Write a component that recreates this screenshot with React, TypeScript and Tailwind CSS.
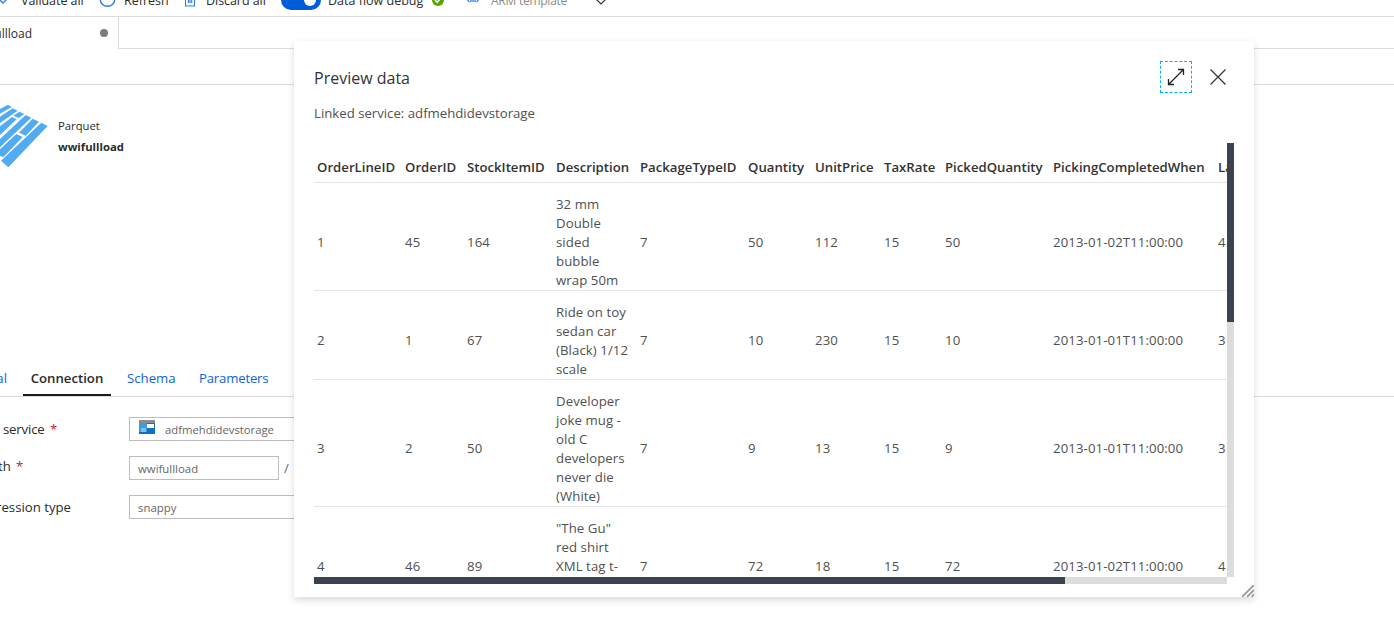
import React from "react";

const columns = [
  "OrderLineID",
  "OrderID",
  "StockItemID",
  "Description",
  "PackageTypeID",
  "Quantity",
  "UnitPrice",
  "TaxRate",
  "PickedQuantity",
  "PickingCompletedWhen",
  "LastEditedBy",
];

const rows: (string | string[])[][] = [
  ["1", "45", "164", ["32 mm", "Double", "sided", "bubble", "wrap 50m"], "7", "50", "112", "15", "50", "2013-01-02T11:00:00", "4"],
  ["2", "1", "67", ["Ride on toy", "sedan car", "(Black) 1/12", "scale"], "7", "10", "230", "15", "10", "2013-01-01T11:00:00", "3"],
  ["3", "2", "50", ["Developer", "joke mug -", "old C", "developers", "never die", "(White)"], "7", "9", "13", "15", "9", "2013-01-01T11:00:00", "3"],
  ["4", "46", "89", ['"The Gu"', "red shirt", "XML tag t-", "shirt (Black)", "XXS"], "7", "72", "18", "15", "72", "2013-01-02T11:00:00", "4"],
];

const grid =
  "grid w-[1010px] grid-cols-[88px_62px_89px_84px_108px_67px_69px_61px_108px_165px_109px] border-b border-[#e5e5e5] pl-[3px]";

function ParquetIcon() {
  return (
    <svg width="48" height="64" viewBox="0 42 144 192" className="block" fill="#50abf3">
      <polygon points="124,98 143,108 25,232 3,212" />
      <polygon points="98,86 117,95 77,137 57,128" />
      <polygon points="49,132 68,141 10,202 0,197 0,178" />
      <polygon points="77,75 94,83 0,172 0,147" />
      <polygon points="58,65 73,72 56,84 40,77" />
      <polygon points="36,81 50,88 0,135 0,109" />
      <polygon points="38,55 53,62 0,99 0,80" />
      <polygon points="24,44 35,51 0,71 0,57" />
    </svg>
  );
}

function Toolbar() {
  return (
    <div className="flex h-[17px] items-end overflow-hidden border-b border-[#dcdcdc] text-[12.5px] text-[#2b2b2b]">
      <div className="flex h-8 w-full shrink-0 items-center leading-[34px] whitespace-nowrap">
        <svg width="8" height="32" className="shrink-0">
          <path d="M0 16l3 3 4-4" fill="none" stroke="#2f7bea" strokeWidth="1.4" />
        </svg>
        <span className="ml-[13px] w-[78px] pt-0.5 tracking-[-0.05px]">Validate all</span>
        <svg width="17" height="32" className="shrink-0">
          <circle cx="8.5" cy="15" r="7.3" fill="none" stroke="#2f7bea" strokeWidth="1.4" />
        </svg>
        <span className="ml-[8px] w-[60px] pt-0.5">Refresh</span>
        <svg width="12" height="32" className="shrink-0">
          <path d="M1.5 8v14h9V8M4.5 10v9M6 10v9M7.7 10v9" fill="none" stroke="#2f7bea" strokeWidth="1.1" />
        </svg>
        <span className="ml-[10px] w-[75px] pt-0.5 tracking-[-0.05px]">Discard all</span>
        <span className="flex h-5 w-10 shrink-0 items-center justify-end rounded-full bg-[#015cda] pr-[5px]">
          <span className="size-3 rounded-full bg-white" />
        </span>
        <span className="ml-[7px] w-[104px] pt-0.5">Data flow debug</span>
        <svg width="12" height="32" className="shrink-0">
          <circle cx="6" cy="16" r="6" fill="#57a300" />
          <path d="M3 16l2.2 2.3L9 13.6" fill="none" stroke="#fff" strokeWidth="1.5" />
        </svg>
        <svg width="16" height="32" className="ml-[21px] shrink-0">
          <path d="M2 13q0 3 2.5 5M14 13q0 3-2.5 5M6 15v3M8 15v3M10 15v3" fill="none" stroke="#2f7bea" strokeWidth="1.3" />
        </svg>
        <span className="ml-[10px] w-[104px] pt-0.5 text-[12px] tracking-[-0.25px] text-[#8a8a8a]">ARM template</span>
        <svg width="12" height="32" className="shrink-0">
          <path d="M1.5 15.5l4.5 4.5 4.5-4.5" fill="none" stroke="#333" strokeWidth="1.2" />
        </svg>
      </div>
    </div>
  );
}

function Workspace() {
  return (
    <div className="flex h-[634px] w-[1394px] flex-col">
      <Toolbar />
      <div className="flex h-8">
        <div className="flex w-[119px] shrink-0 items-center border-r border-[#dcdcdc] text-[12px] text-[#2b2b2b]">
          <span className="flex w-8 justify-end pt-0.5 whitespace-nowrap">wwifullload</span>
          <span className="ml-[68px] size-2 rounded-full bg-[#7b7b7b]" />
        </div>
        <div className="flex-1 border-b border-[#dcdcdc]" />
      </div>
      <div className="h-9 border-b border-[#dcdcdc]" />
      <div className="flex h-[275px] pt-[19px]">
        <ParquetIcon />
        <div className="ml-[10px] pt-[11px] text-[11.3px] leading-[21px] text-[#2b2b2b]">
          <div>Parquet</div>
          <div className="font-bold">wwifullload</div>
        </div>
      </div>
      <div className="flex h-[37px] border-b border-[#dcdcdc] text-[13.2px] leading-[37px] text-[#0f62d8]">
        <div className="flex w-[23px] justify-end overflow-hidden pr-4 whitespace-nowrap">General</div>
        <div className="w-[88px] border-b-2 border-[#1b1b1b] text-center font-[550] text-[#2b2b2b]">Connection</div>
        <div className="ml-4 w-[72px]">Schema</div>
        <div className="tracking-[-0.2px]">Parameters</div>
      </div>
      <div className="flex flex-col gap-[15px] pt-5 text-[13.2px] text-[#2b2b2b]">
        <div className="flex h-6 items-center">
          <div className="flex w-[57px] justify-end pt-0.5 tracking-[-0.15px] whitespace-pre">
            Linked service <span className="pl-[2px] text-[#c4262e]">*</span>
          </div>
          <div className="ml-[72px] flex h-6 w-[400px] items-center border border-[#bdbdbd] pl-[9px] text-[11.3px] text-[#666]">
            <svg width="16" height="14" className="mb-1">
              <rect width="16" height="14" fill="#8a8d8f" />
              <rect y="3" width="16" height="11" fill="#0f70c4" />
              <rect y="3" width="8" height="9" fill="#3c9be0" />
              <rect x="8" y="4" width="7" height="4" fill="#fff" />
              <rect x="2" y="8" width="5" height="4" fill="#7fc0ee" />
            </svg>
            <span className="ml-[10px] pt-0.5">adfmehdidevstorage</span>
          </div>
        </div>
        <div className="flex h-6 items-center">
          <div className="flex w-[23px] justify-end pb-[3px] tracking-[-0.15px] whitespace-pre">
            File path <span className="pl-[2px] text-[#c4262e]">*</span>
          </div>
          <div className="ml-[106px] flex h-6 w-[150px] items-center border border-[#bdbdbd] pt-0.5 pl-2 text-[11.4px] text-[#666]">wwifullload</div>
          <span className="ml-[5px] pt-0.5 text-[#666]">/</span>
        </div>
        <div className="flex h-6 items-center">
          <div className="flex w-[71px] justify-end pt-0.5 whitespace-nowrap">Compression type</div>
          <div className="ml-[58px] flex h-6 w-[400px] items-center border border-[#bdbdbd] pt-0.5 pl-2 text-[11.4px] text-[#666]">snappy</div>
        </div>
      </div>
    </div>
  );
}

function PreviewDialog() {
  return (
    <div className="absolute top-[41px] left-[294px] flex h-[556px] w-[960px] flex-col bg-white px-5 shadow-[0_3px_7px_rgba(0,0,0,0.15)]">
      <div className="flex h-[72px] items-center">
        <h1 className="pt-0.5 text-[16px] text-[#333]">Preview data</h1>
        <div className="ml-auto flex size-8 items-center justify-center border border-dashed border-[#00b4f0]">
          <svg width="18" height="18" viewBox="0 0 18 18" fill="none" stroke="#222" strokeWidth="1.3">
            <path d="M1.5 16.5L16.5 1.5M11 1.5h5.5V7M1.5 11v5.5H7" />
          </svg>
        </div>
        <svg width="16" height="16" viewBox="0 0 16 16" className="mr-2 ml-[18px]" fill="none" stroke="#333" strokeWidth="1.2">
          <path d="M.5.5l15 15M15.5.5l-15 15" />
        </svg>
      </div>
      <p className="h-[30px] text-[13.2px] leading-[0px] text-[#505050]">Linked service: adfmehdidevstorage</p>
      <div className="flex h-[434px] w-[920px]">
        <div className="h-[434px] w-[913px] overflow-hidden text-[13.2px] leading-[19px] text-[#505050]">
          <div className={grid}>
            {columns.map((c) => (
              <div key={c} className="pt-[15px] pb-[5px] font-[550] text-[#333]">{c}</div>
            ))}
          </div>
          {rows.map((r, i) => (
            <div key={i} className={grid + " items-center pt-3"}>
              {r.map((v, j) =>
                Array.isArray(v) ? (
                  <div key={j} className="tracking-[0.08px] whitespace-nowrap">
                    {v.map((l) => <div key={l}>{l}</div>)}
                  </div>
                ) : (
                  <div key={j} className="pb-px tracking-[0.1px] whitespace-nowrap">{v}</div>
                )
              )}
            </div>
          ))}
        </div>
        <div className="w-[7px] bg-[#dcdcdc]">
          <div className="h-[179px] bg-[#3b434e]" />
        </div>
      </div>
      <div className="h-[7px] w-[913px] shrink-0 bg-[#dcdcdc]">
        <div className="h-[7px] w-[751px] bg-[#3b434e]" />
      </div>
      <svg width="12" height="12" className="absolute right-0 bottom-0" stroke="#9a9a9a" strokeWidth="1.8">
        <path d="M0 12L12 0M5 12l7-7M9.5 12l3-3" />
      </svg>
    </div>
  );
}

export default function App() {
  return (
    <div className="relative h-[634px] w-[1394px] overflow-hidden bg-white font-['Open_Sans','Noto_Sans',sans-serif]">
      <Workspace />
      <PreviewDialog />
    </div>
  );
}
